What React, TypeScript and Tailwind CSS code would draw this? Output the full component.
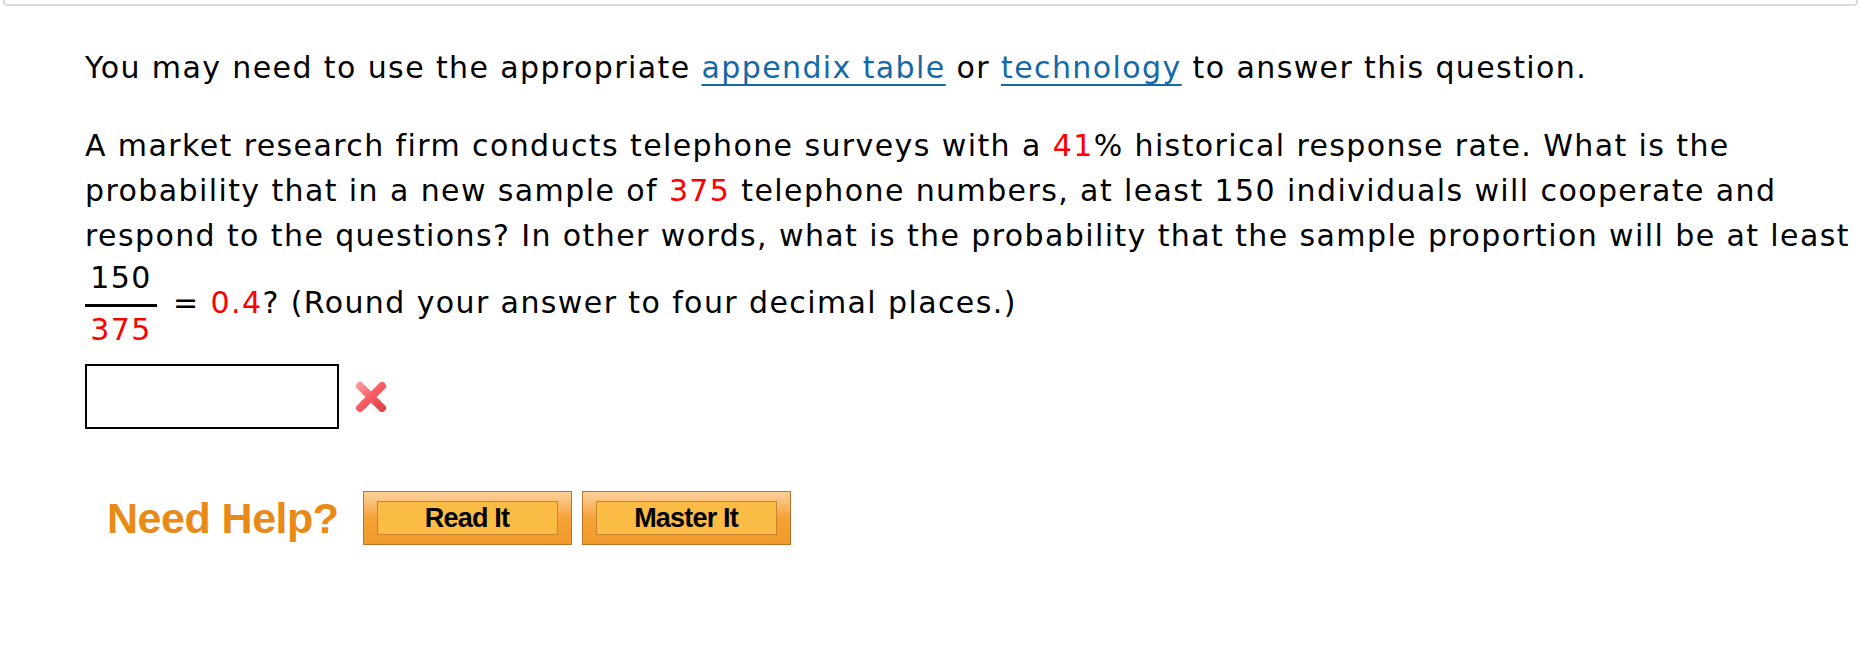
function WrongMark() {
  return (
    <svg width="36" height="34" viewBox="0 0 36 34" className="shrink-0">
      <defs>
        <linearGradient id="xg" x1="0" y1="0" x2="1" y2="1">
          <stop offset="0" stopColor="#ff9196" />
          <stop offset="0.5" stopColor="#f65a62" />
          <stop offset="1" stopColor="#e4434b" />
        </linearGradient>
      </defs>
      <path
        d="M7 6 L29 28 M29 6 L7 28"
        stroke="url(#xg)"
        strokeWidth="8"
        strokeLinecap="round"
        fill="none"
      />
    </svg>
  );
}

function HelpButton({ label }: { label: string }) {
  return (
    <button className="w-[209px] h-[54px] border border-[#b9742a] bg-gradient-to-b from-[#fcd29a] via-[#f5a134] to-[#f29a2c] px-[13px] py-[9px]">
      <span className="flex h-full w-full items-center justify-center border border-[#c8852f] bg-[#fbbc46] text-[27px] font-bold tracking-[-0.8px] text-black [font-family:'Liberation_Sans',Arial,sans-serif]">
        {label}
      </span>
    </button>
  );
}

export default function App() {
  return (
    <div className="min-h-[660px] w-[1861px] bg-white text-black">
      <div className="mx-[3px] h-[6px] rounded-b-[4px] border-x-2 border-b-2 border-[#dcdcdc]" />

      <div className="pl-[85px] pt-[39px] text-[30px] leading-[45px] tracking-[1.4px] [font-family:Verdana,'DejaVu_Sans',sans-serif]">
        <p className="whitespace-nowrap">
          You may need to use the appropriate{' '}
          <a href="#" className="text-[#1469a6] underline decoration-2 underline-offset-[6px]">
            appendix table
          </a>{' '}
          or{' '}
          <a href="#" className="text-[#1469a6] underline decoration-2 underline-offset-[6px]">
            technology
          </a>{' '}
          to answer this question.
        </p>

        <p className="mt-[33px] whitespace-nowrap">
          A market research firm conducts telephone surveys with a{' '}
          <span className="text-[#ff0000]">41</span>% historical response rate. What is the
          <br />
          probability that in a new sample of <span className="text-[#ff0000]">375</span> telephone
          numbers, at least 150 individuals will cooperate and
          <br />
          respond to the questions? In other words, what is the probability that the sample
          proportion will be at least
        </p>

        <div className="mt-[2px] flex items-center whitespace-nowrap">
          <div className="flex w-[72px] flex-col items-center leading-[36px]">
            <span className="pb-[8px]">150</span>
            <span className="h-[3px] w-full bg-black" />
            <span className="pt-[5px] text-[#ff0000]">375</span>
          </div>
          <span className="ml-[16px] pb-[4px]">
            = <span className="text-[#ff0000]">0.4</span>? (Round your answer to four decimal
            places.)
          </span>
        </div>

        <div className="mt-[16px] flex items-center gap-[14px]">
          <input
            type="text"
            className="h-[65px] w-[254px] border-2 border-black bg-white outline-none"
          />
          <WrongMark />
        </div>

        <div className="mt-[62px] ml-[22px] flex items-center gap-[10px]">
          <span className="mr-[14px] text-[43px] font-bold leading-none tracking-[-0.5px] text-[#ea8a16] [font-family:'Liberation_Sans',Arial,sans-serif]">
            Need Help?
          </span>
          <HelpButton label="Read It" />
          <HelpButton label="Master It" />
        </div>
      </div>
    </div>
  );
}
